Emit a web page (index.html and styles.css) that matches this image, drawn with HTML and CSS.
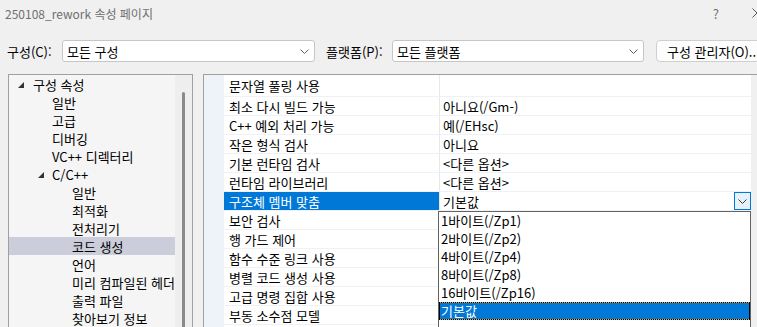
FILE: index.html
```html
<!DOCTYPE html>
<html lang="ko">
<head>
    <meta charset="UTF-8">
    <title>250108_rework 속성 페이지</title>
    <link rel="stylesheet" href="styles.css">
</head>
<body>
    <div class="titlebar">
        <span class="title">250108_rework 속성 페이지</span>
        <span class="help">?</span>
        <svg class="close" width="10" height="10" viewBox="0 0 10 10">
            <path d="M0.5 0.5 L9.5 9.5 M9.5 0.5 L0.5 9.5" stroke="#5a5a5a" stroke-width="1" fill="none"/>
        </svg>
    </div>

    <div class="toolbar">
        <label class="tb-label label-config">구성(C):</label>
        <div class="combo combo-config">
            <span>모든 구성</span>
            <svg width="9" height="5" viewBox="0 0 9 5"><path d="M0.5 0.5 L4.5 4.5 L8.5 0.5" fill="none" stroke="#606060"/></svg>
        </div>
        <label class="tb-label label-platform">플랫폼(P):</label>
        <div class="combo combo-platform">
            <span>모든 플랫폼</span>
            <svg width="9" height="5" viewBox="0 0 9 5"><path d="M0.5 0.5 L4.5 4.5 L8.5 0.5" fill="none" stroke="#606060"/></svg>
        </div>
        <button class="btn-manager" type="button">구성 관리자(O)...</button>
    </div>

    <div class="main">
        <div class="tree">
            <ul class="tree-list">
                <li class="tree-item lv0"><span class="twisty"></span>구성 속성</li>
                <li class="tree-item lv1">일반</li>
                <li class="tree-item lv1">고급</li>
                <li class="tree-item lv1">디버깅</li>
                <li class="tree-item lv1">VC++ 디렉터리</li>
                <li class="tree-item lv1 open"><span class="twisty"></span>C/C++</li>
                <li class="tree-item lv2">일반</li>
                <li class="tree-item lv2">최적화</li>
                <li class="tree-item lv2">전처리기</li>
                <li class="tree-item lv2 selected">코드 생성</li>
                <li class="tree-item lv2">언어</li>
                <li class="tree-item lv2">미리 컴파일된 헤더</li>
                <li class="tree-item lv2">출력 파일</li>
                <li class="tree-item lv2">찾아보기 정보</li>
            </ul>
            <div class="tree-scroll"><div class="thumb"></div></div>
        </div>

        <div class="grid">
            <div class="cat-col"></div>
            <div class="rows">
                <div class="row"><div class="name">문자열 풀링 사용</div><div class="value"></div></div>
                <div class="row"><div class="name">최소 다시 빌드 가능</div><div class="value">아니요(/Gm-)</div></div>
                <div class="row"><div class="name">C++ 예외 처리 가능</div><div class="value">예(/EHsc)</div></div>
                <div class="row"><div class="name">작은 형식 검사</div><div class="value">아니요</div></div>
                <div class="row"><div class="name">기본 런타임 검사</div><div class="value">&lt;다른 옵션&gt;</div></div>
                <div class="row"><div class="name">런타임 라이브러리</div><div class="value">&lt;다른 옵션&gt;</div></div>
                <div class="row selected">
                    <div class="name">구조체 멤버 맞춤</div>
                    <div class="value">
                        <span>기본값</span>
                        <span class="dd-btn">
                            <svg width="9" height="5" viewBox="0 0 9 5"><path d="M0.5 0.5 L4.5 4.5 L8.5 0.5" fill="none" stroke="#3c3c3c"/></svg>
                        </span>
                    </div>
                </div>
                <div class="row"><div class="name">보안 검사</div><div class="value"></div></div>
                <div class="row"><div class="name">행 가드 제어</div><div class="value"></div></div>
                <div class="row"><div class="name">함수 수준 링크 사용</div><div class="value"></div></div>
                <div class="row"><div class="name">병렬 코드 생성 사용</div><div class="value"></div></div>
                <div class="row"><div class="name">고급 명령 집합 사용</div><div class="value"></div></div>
                <div class="row"><div class="name">부동 소수점 모델</div><div class="value"></div></div>
                <div class="row"><div class="name"></div><div class="value"></div></div>
            </div>
            <div class="grid-scroll"></div>

            <!-- open dropdown of 구조체 멤버 맞춤 -->
            <ul class="dropdown-list">
                <li>1바이트(/Zp1)</li>
                <li>2바이트(/Zp2)</li>
                <li>4바이트(/Zp4)</li>
                <li>8바이트(/Zp8)</li>
                <li>16바이트(/Zp16)</li>
                <li class="current">기본값</li>
            </ul>
        </div>
    </div>
</body>
</html>
```

FILE: styles.css
```css
body {
    margin: 0;
    width: 757px;
    height: 327px;
    overflow: hidden;
    background-color: #f0f0f0;
    font-family: "Noto Sans CJK KR", "Noto Sans", sans-serif;
    font-size: 13px;
    color: #000;
}

.titlebar {
    height: 26px;
    display: flex;
    align-items: center;
    padding-left: 5px;
    font-size: 12px;
    color: #6f6f6f;
}

.title {
    flex: 1;
}

.help {
    margin-right: 33px;
    font-size: 13px;
    color: #707070;
}

.close {
    flex-shrink: 0;
    margin-right: -5px;
}

.toolbar {
    display: flex;
    align-items: center;
    height: 22px;
    margin-top: 14px;
    padding-left: 7px;
}

.toolbar > * {
    flex-shrink: 0;
}

.tb-label {
    width: 55px;
}

.label-platform {
    width: 66px;
    margin-left: 11px;
}

.combo {
    height: 22px;
    box-sizing: border-box;
    background-color: #fff;
    border: 1px solid #c6c6c6;
    border-radius: 3px;
    display: flex;
    align-items: center;
    justify-content: space-between;
    padding: 0 5px 0 4px;
}

.combo-config {
    width: 253px;
}

.combo-platform {
    width: 252px;
}

.btn-manager {
    margin-left: 12px;
    height: 22px;
    padding: 0 10px;
    background-color: #fdfdfd;
    border: 1px solid #d0d0d0;
    border-radius: 4px;
    font-family: inherit;
    font-size: 13px;
    white-space: nowrap;
}

.main {
    display: flex;
    margin-top: 12px;
    height: 300px;
}

/* tree */
.tree {
    margin-left: 8px;
    width: 185px;
    flex-shrink: 0;
    box-sizing: border-box;
    border: 1px solid #a0a0a0;
    border-bottom: none;
    background-color: #f5f5f5;
    display: flex;
}

.tree-list {
    width: 166px;
    list-style: none;
    margin: 0;
    padding: 0;
}

.tree-item {
    height: 18px;
    display: flex;
    align-items: center;
    white-space: nowrap;
}

.tree-item.lv0 { padding-left: 9px; }
.tree-item.lv1 { padding-left: 43px; }
.tree-item.lv1.open { padding-left: 29px; }
.tree-item.lv2 { padding-left: 63px; }

.tree-item.selected {
    background-color: #cbcdda;
}

.twisty {
    width: 0;
    height: 0;
    border-left: 6px solid transparent;
    border-bottom: 6px solid #333;
    margin-right: 9px;
    margin-top: 1px;
}

.lv1 .twisty {
    margin-right: 8px;
}

.tree-scroll {
    width: 17px;
    background-color: #eeeeee;
    padding-top: 17px;
    box-sizing: border-box;
}

.thumb {
    width: 3px;
    height: 300px;
    margin-left: 7px;
    background-color: #8a8a8a;
    border-radius: 2px;
}

/* property grid */
.grid {
    position: relative;
    margin-left: 10px;
    display: flex;
    flex-shrink: 0;
    border-top: 1px solid #a0a0a0;
    border-left: 1px solid #a0a0a0;
    background-color: #fff;
}

.cat-col {
    width: 20px;
    background-color: #eef3fa;
}

.rows {
    width: 527px;
}

.row {
    display: flex;
    height: 19px;
    box-sizing: border-box;
    border-bottom: 1px solid #eef1f5;
}

.row:first-child {
    height: 22px;
}

.name {
    width: 215px;
    padding-left: 5px;
    box-sizing: border-box;
    display: flex;
    align-items: center;
    white-space: nowrap;
}

.value {
    flex: 1;
    border-left: 1px solid #e8e8e8;
    padding-left: 3px;
    display: flex;
    align-items: center;
    justify-content: space-between;
    white-space: nowrap;
}

.row.selected .name {
    background-color: #0078d7;
    color: #fff;
}

.dd-btn {
    width: 17px;
    height: 18px;
    box-sizing: border-box;
    border: 1px solid #0078d7;
    background-color: #e5f1fb;
    display: flex;
    align-items: center;
    justify-content: center;
}

.grid-scroll {
    width: 17px;
    background-color: #f0f0f0;
}

.dropdown-list {
    position: absolute;
    left: 234px;
    top: 136px;
    width: 313px;
    height: 130px;
    box-sizing: border-box;
    margin: 0;
    padding: 0;
    list-style: none;
    background-color: #fff;
    border: 1px solid #646464;
}

.dropdown-list li {
    height: 18px;
    line-height: 18px;
    padding-left: 2px;
    box-sizing: border-box;
}

.dropdown-list li.current {
    background-color: #0078d7;
    color: #fff;
    border: 1px solid;
    border-image: repeating-linear-gradient(90deg, #000 0 1px, #f0a030 1px 2px) 1;
    padding-left: 1px;
    line-height: 16px;
}
```
